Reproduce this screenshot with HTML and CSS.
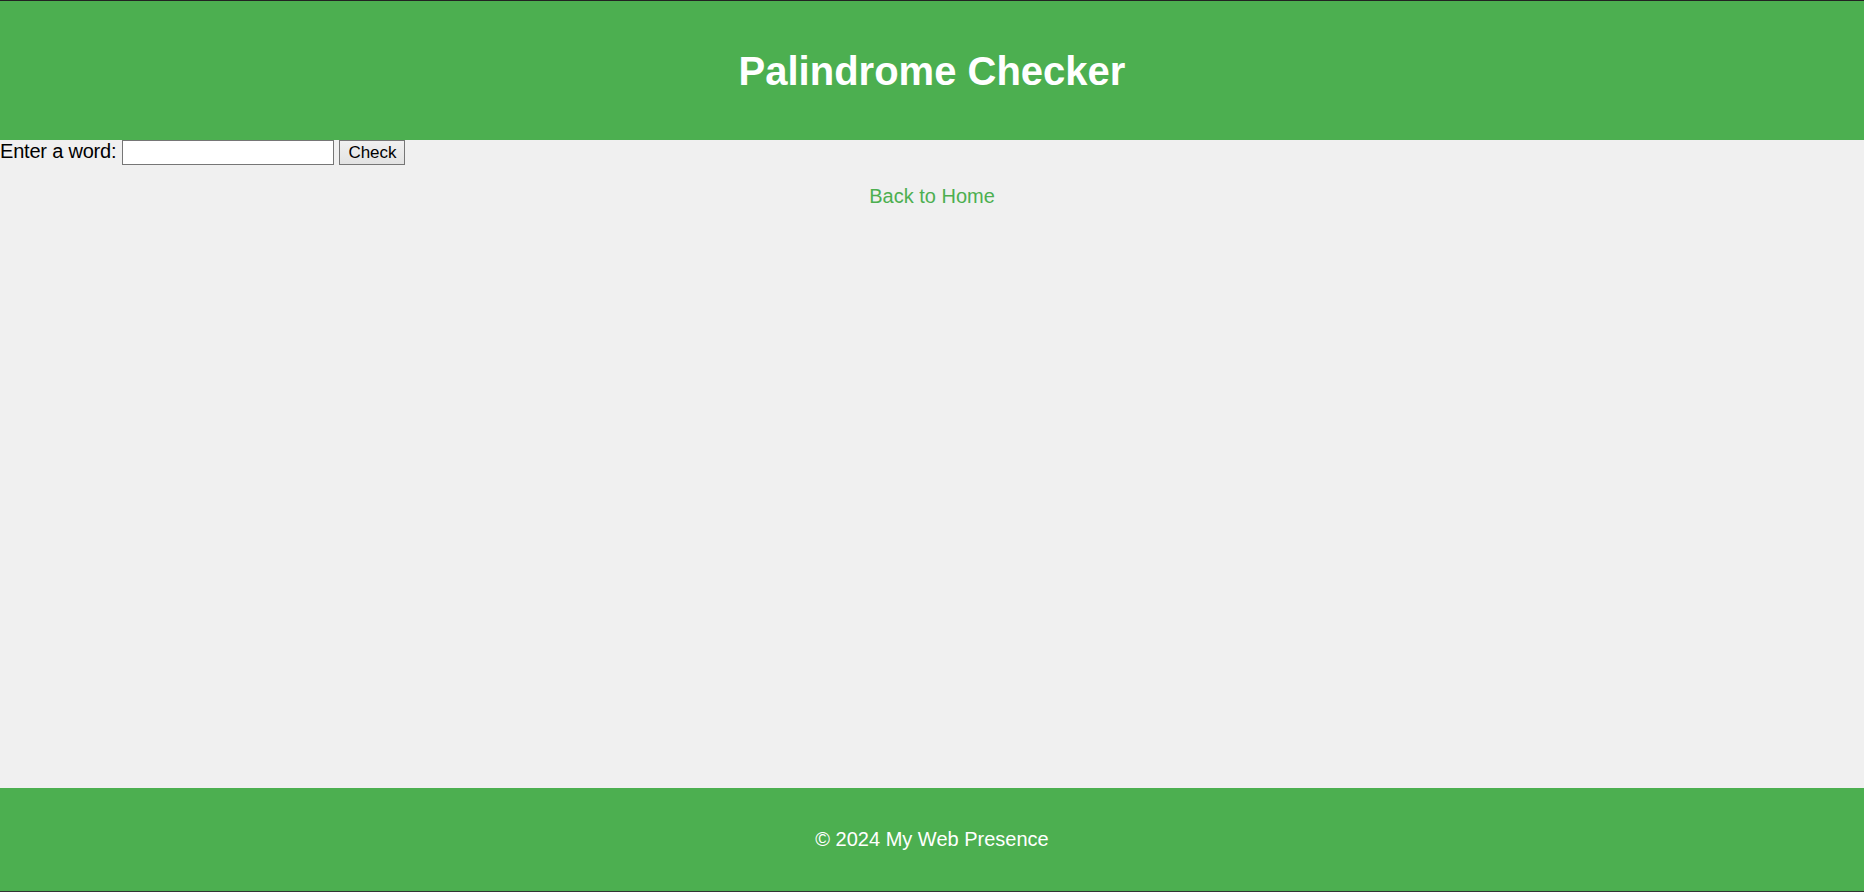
FILE: index.html
```html
<!DOCTYPE html>
<html lang="en">
<head>
<meta charset="utf-8">
<title>Palindrome Checker</title>
<link rel="stylesheet" href="styles.css">
</head>
<body>
<div class="page">
  <header class="site-header">
    <h1 class="title">Palindrome Checker</h1>
  </header>
  <main class="content">
    <form class="checker">
      <label class="label" for="word">Enter a word:</label>
      <input class="word-input" type="text" id="word">
      <button class="check-btn" type="button">Check</button>
    </form>
    <p class="back"><a class="back-link" href="#">Back to Home</a></p>
  </main>
  <footer class="site-footer">
    <p class="copy">© 2024 My Web Presence</p>
  </footer>
</div>
</body>
</html>
```
FILE: styles.css
```css
html, body {
  margin: 0;
  padding: 0;
}
body {
  background: #f0f0f0;
  font-family: "Liberation Sans", Arial, sans-serif;
  font-size: 20px;
  color: #000;
}
.page {
  display: flex;
  flex-direction: column;
  height: 892px;
  box-sizing: border-box;
  border-top: 1px solid #222;
  border-bottom: 1px solid #333;
}
.site-header {
  background: #4caf50;
  color: #fff;
  text-align: center;
  padding: 20px;
}
.title {
  margin: 26.5px 0;
  font-size: 40px;
  font-weight: bold;
  line-height: 46px;
}
.content {
  flex: 1;
}
.checker {
  margin: 0;
  line-height: 23px;
}
.label {
  font-size: 20px;
  letter-spacing: -0.2px;
}
.word-input {
  box-sizing: border-box;
  width: 212px;
  height: 25px;
  margin: 0;
  padding: 1px 3px;
  border: 1px solid #767676;
  background: #fff;
  font-family: "Liberation Sans", Arial, sans-serif;
  font-size: 16.67px;
  vertical-align: top;
}
.check-btn {
  box-sizing: border-box;
  width: 66px;
  height: 25px;
  margin: 0;
  padding: 0 6px;
  border: 1px solid #767676;
  border-radius: 0;
  background: linear-gradient(#f0f0f0, #e3e3e3);
  font-family: "Liberation Sans", Arial, sans-serif;
  font-size: 17px;
  color: #000;
  vertical-align: top;
}
.back {
  margin: 20px 0;
  text-align: center;
  line-height: 23px;
}
.back-link {
  color: #4caf50;
  text-decoration: none;
}
.site-footer {
  background: #4caf50;
  color: #fff;
  text-align: center;
  padding: 20px;
}
.copy {
  margin: 20px 0;
  line-height: 23px;
}
```
